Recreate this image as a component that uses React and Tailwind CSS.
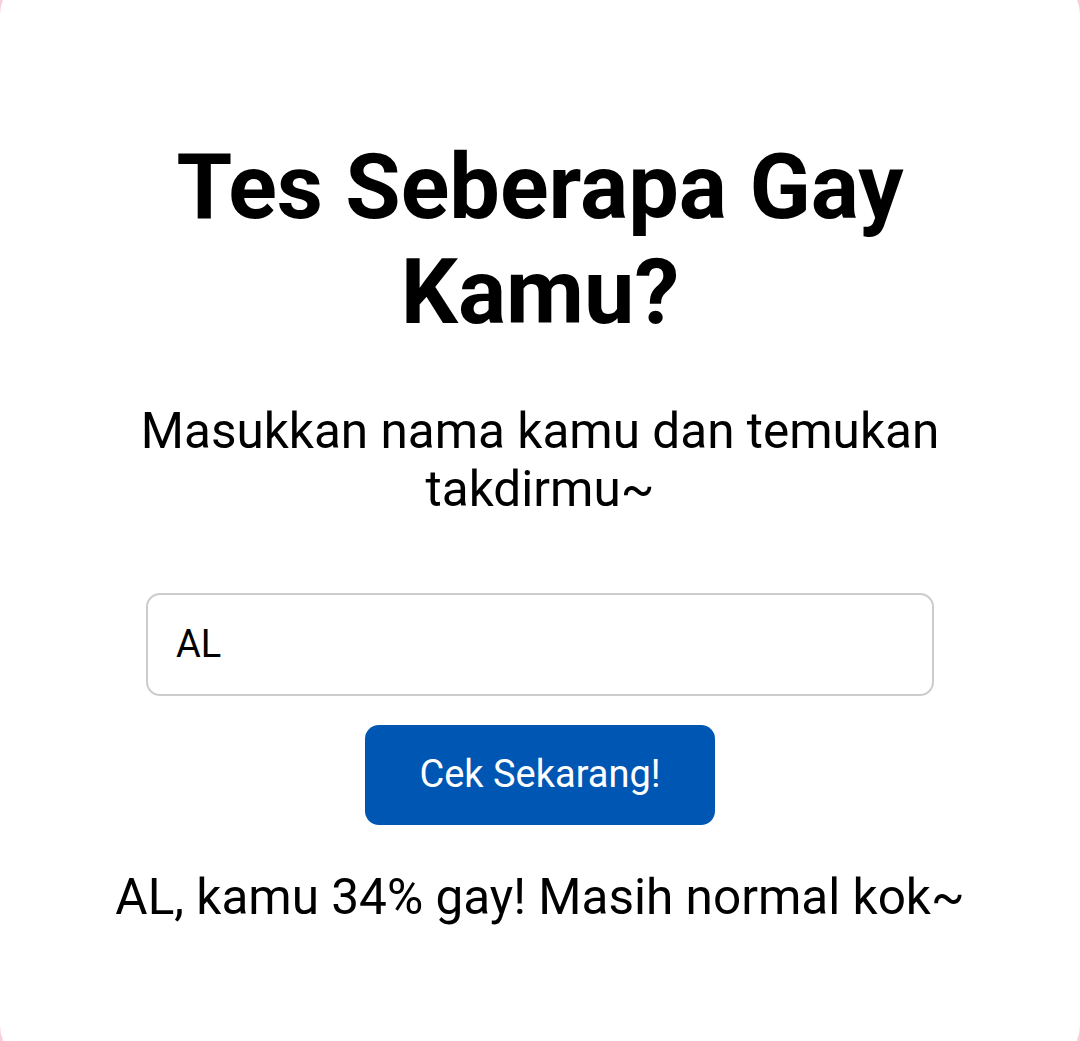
export default function App() {
  return (
    <div className="min-h-[1041px] w-full overflow-hidden bg-[#f8d0dc]" style={{ fontFamily: 'Roboto, "Liberation Sans", sans-serif' }}>
      <div className="-mt-[25px] flex min-h-[1090px] w-full flex-col items-center rounded-[40px] bg-white px-[56px] pt-[160px] text-center">
        <h1 className="text-[90px] font-bold leading-[1.171] text-black">Tes Seberapa Gay Kamu?</h1>
        <p className="mt-[57px] max-w-[900px] text-[49.5px] leading-[1.171] text-black">Masukkan nama kamu dan temukan takdirmu~</p>
        <div className="mt-[74px] flex h-[103px] w-[788px] items-center rounded-[14px] border-2 border-[#cccccc] bg-white pl-[28px] text-left">
          <span className="text-[38px] text-black">AL</span>
        </div>
        <button className="mt-[29px] flex h-[100px] w-[350px] items-center justify-center rounded-[14px] bg-[#0056b3] text-[38px] text-white">
          Cek Sekarang!
        </button>
        <p className="mt-[44px] text-[49.5px] leading-[1.171] text-black">AL, kamu 34% gay! Masih normal kok~</p>
      </div>
    </div>
  );
}
